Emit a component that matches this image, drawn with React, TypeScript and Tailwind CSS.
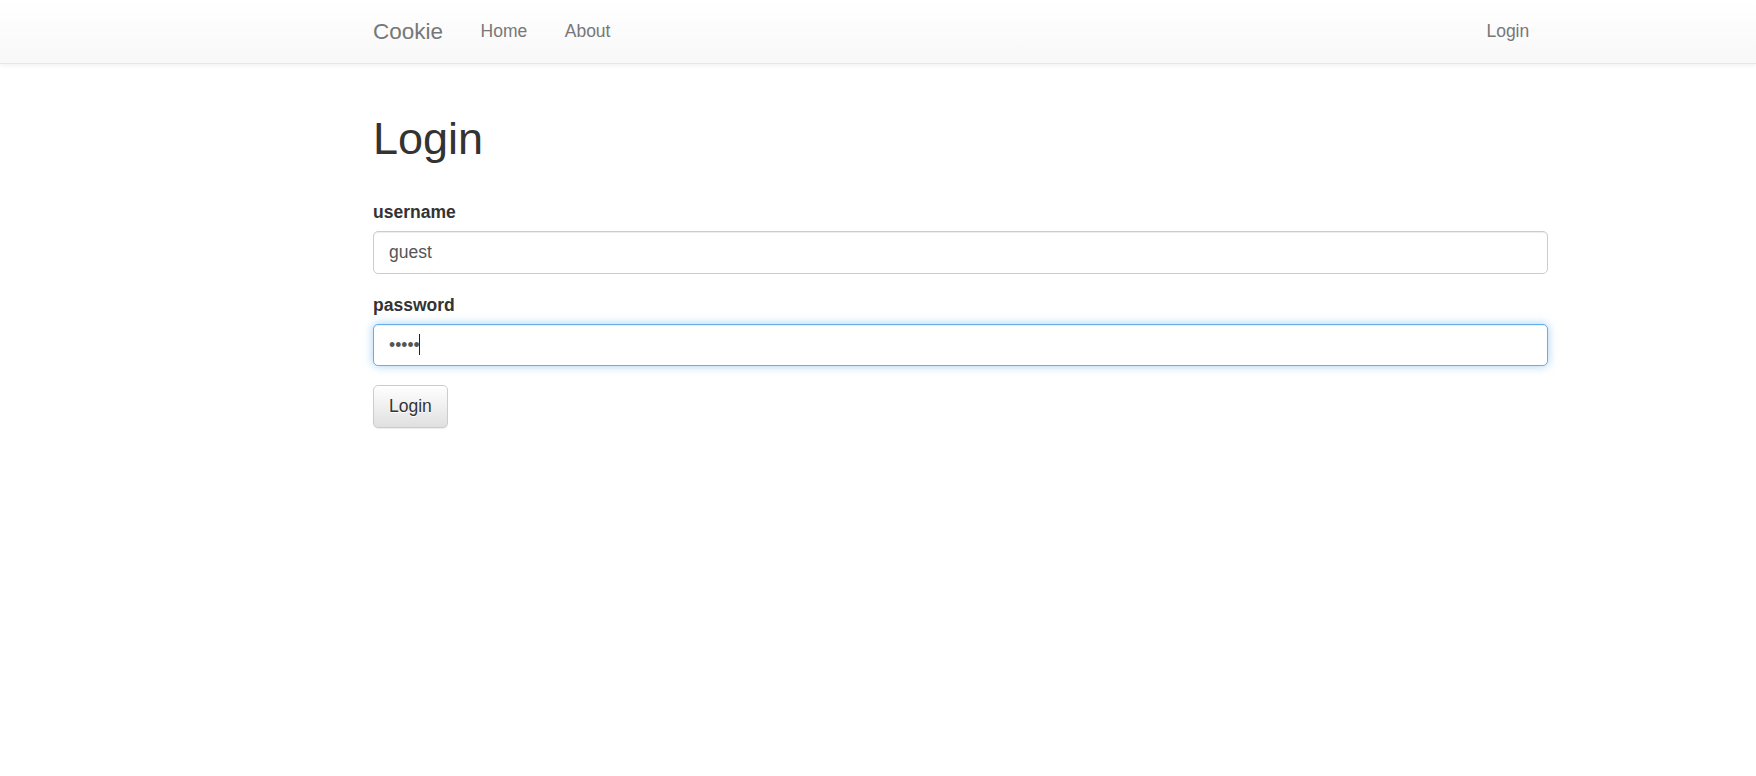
const font = "font-['Liberation_Sans','Helvetica_Neue',Helvetica,Arial,sans-serif]";

const navLink =
  "block px-[18.75px] py-[18.75px] text-[17.5px] leading-[25px] text-[#777] hover:text-[#333]";

function Navbar() {
  return (
    <nav className="h-[63.5px] border-b border-[#e7e7e7] bg-linear-to-b from-white to-[#f8f8f8] shadow-[inset_0_1px_0_rgba(255,255,255,0.15),0_1px_5px_rgba(0,0,0,0.075)]">
      <div className="ml-[373px] flex w-[1175px] items-start justify-between">
        <div className="flex items-start">
          <a
            href="#"
            className="-ml-[18.75px] block h-[62.5px] px-[18.75px] py-[18.75px] text-[22.5px] leading-[25px] text-[#777]"
          >
            Cookie
          </a>
          <ul className="flex">
            <li>
              <a href="#" className={navLink}>
                Home
              </a>
            </li>
            <li>
              <a href="#" className={navLink}>
                About
              </a>
            </li>
          </ul>
        </div>
        <ul className="flex">
          <li>
            <a href="#" className={navLink}>
              Login
            </a>
          </li>
        </ul>
      </div>
    </nav>
  );
}

const inputBase =
  "block h-[42.5px] w-full rounded-[5px] border bg-white px-[15px] py-[7.5px] text-[17.5px] leading-[25px] text-[#555] outline-none";

export default function App() {
  return (
    <div className={`${font} min-h-screen bg-white text-[17.5px] leading-[25px] text-[#333]`}>
      <Navbar />
      <main className="ml-[373px] w-[1175px]">
        <h1 className="mt-[50px] mb-[37px] text-[45px] leading-[1.1] font-normal text-[#333]">Login</h1>
        <form onSubmit={(e) => e.preventDefault()}>
          <div className="mb-[18.75px]">
            <label htmlFor="username" className="mb-[6.25px] inline-block font-bold">
              username
            </label>
            <input
              id="username"
              type="text"
              defaultValue="guest"
              className={`${inputBase} border-[#ccc] shadow-[inset_0_1px_1px_rgba(0,0,0,0.075)]`}
            />
          </div>
          <div className="mb-[18.75px]">
            <label htmlFor="password" className="mb-[6.25px] inline-block font-bold">
              password
            </label>
            <div className="relative">
              <input
                id="password"
                type="password"
                defaultValue="guest"
                className={`${inputBase} border-[#66afe9] shadow-[inset_0_1px_1px_rgba(0,0,0,0.075),0_0_10px_rgba(102,175,233,0.6)]`}
              />
              {/* caret of the focused field */}
              <span className="pointer-events-none absolute top-[10.5px] left-[46px] h-[21px] w-px bg-[#222]" />
            </div>
          </div>
          <button
            type="submit"
            className="h-[42.5px] rounded-[5px] border border-[#ccc] bg-linear-to-b from-white to-[#e0e0e0] px-[15px] text-[17.5px] leading-[25px] text-[#333] shadow-[inset_0_1px_0_rgba(255,255,255,0.15),0_1px_1px_rgba(0,0,0,0.075)] [text-shadow:0_1px_0_#fff]"
          >
            Login
          </button>
        </form>
      </main>
    </div>
  );
}
